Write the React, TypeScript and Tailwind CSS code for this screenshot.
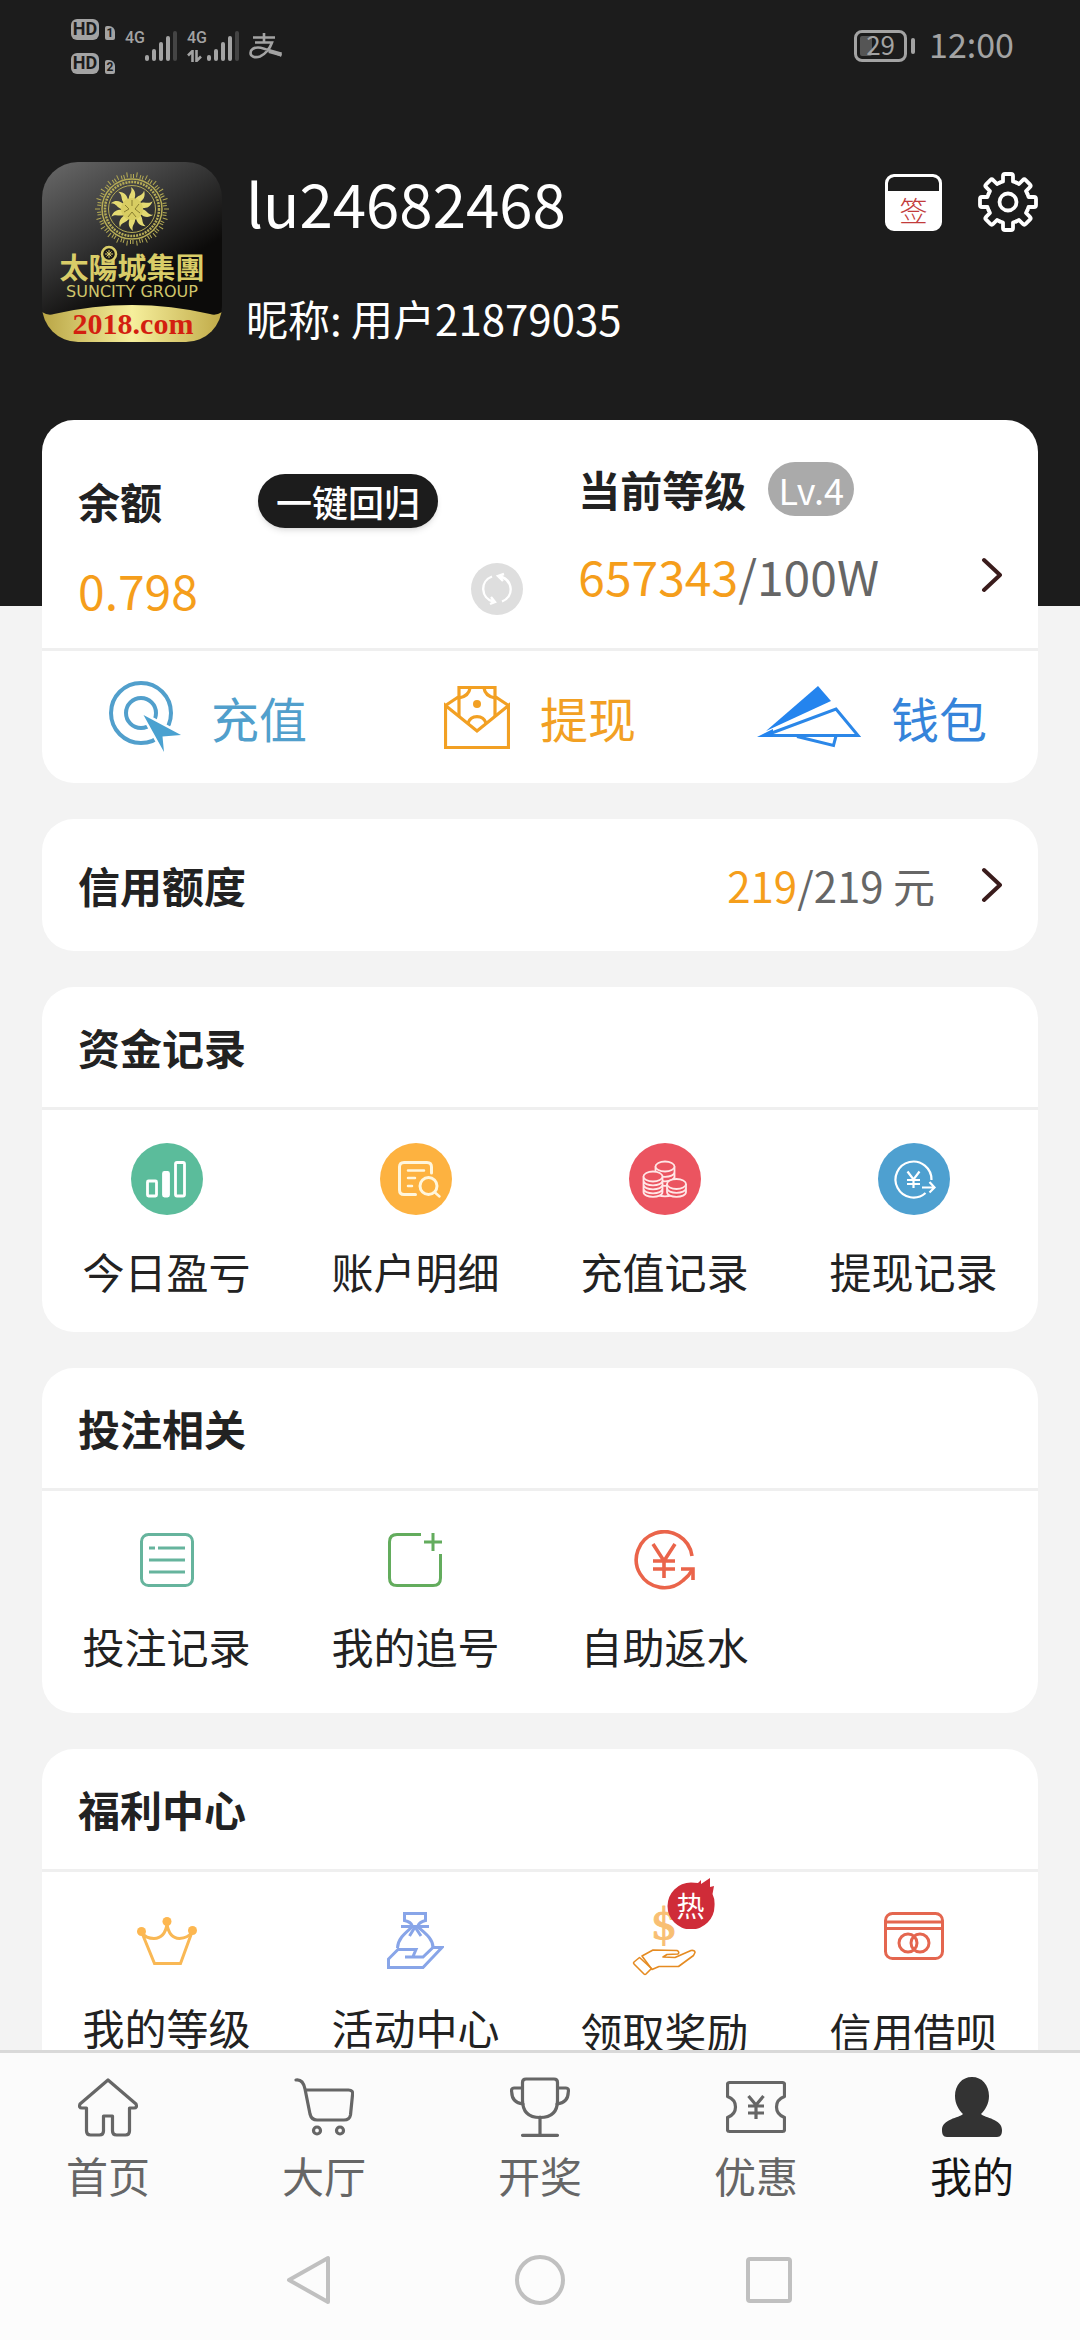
import React from 'react';

const SignalBars = () => (
  <svg width="32" height="32" viewBox="0 0 32 32" fill="#a3a3a3">
    <rect x="0" y="25" width="4" height="6" rx="2" />
    <rect x="7" y="19" width="4" height="12" rx="2" />
    <rect x="14" y="12" width="4" height="19" rx="2" />
    <rect x="21" y="6" width="4" height="25" rx="2" />
    <rect x="28" y="1" width="4" height="30" rx="2" fill="#444" />
  </svg>
);

const HdTag = ({ sim }) => (
  <div className="flex items-end gap-1.5">
    <span className="flex h-[21px] w-7 items-center justify-center rounded-md bg-[#a3a3a3] font-['Roboto',sans-serif] text-[18px] leading-none font-bold text-[#1c1c1c]">
      HD
    </span>
    <span className="flex h-3.5 w-2.5 items-center justify-center rounded-xs rounded-tr-md bg-[#a3a3a3] font-['Roboto',sans-serif] text-[12px] leading-none font-bold text-[#1c1c1c]">
      {sim}
    </span>
  </div>
);

const StatusBar = () => (
  <div className="flex h-[92px] items-center justify-between pr-[66px] pl-[71px] text-[#a3a3a3]">
    <div className="flex items-center">
      <div className="flex flex-col gap-[13px]">
        <HdTag sim="1" />
        <HdTag sim="2" />
      </div>
      <div className="ml-2.5 flex items-end">
        <span className="mb-4 font-['Roboto',sans-serif] text-[16px] leading-none font-medium">4G</span>
        <SignalBars />
      </div>
      <div className="ml-2.5 flex items-end">
        <span className="flex flex-col items-start gap-1">
          <span className="font-['Roboto',sans-serif] text-[16px] leading-none font-medium">4G</span>
          <svg width="15" height="12" viewBox="0 0 15 12" fill="none" stroke="#a3a3a3" strokeWidth="2.6">
            <path d="M5.500 12V1L1 5.500M9.500 0v11l4.500-4.500" />
          </svg>
        </span>
        <SignalBars />
      </div>
      <svg className="ml-2.5" width="33" height="26" viewBox="0 0 33 26" fill="none" stroke="#a3a3a3" strokeWidth="2.6">
        <path d="M15 0v9M4 4.500h22M6 9.500h17c-2 6-7 12-12 14-5 1.600-9.500 0-9.500-3.500S5 14.500 9 14.500c7 0 15 5 23.500 8" />
        <path d="M20 18l12.500 3.500" strokeWidth="4" />
      </svg>
    </div>
    <div className="flex items-center gap-3.5">
      <div className="flex items-center gap-1">
        <div className="relative flex h-8 w-[53px] items-center justify-center rounded-lg border-3 border-[#a3a3a3]">
          <span className="absolute top-[3px] left-[3px] h-5 w-3 rounded-xs bg-[#555]" />
          <span className="relative pb-1 text-[26px] leading-none">29</span>
        </div>
        <span className="h-4 w-1 rounded-full bg-[#a3a3a3]" />
      </div>
      <span className="pb-1 text-[34px] leading-none">12:00</span>
    </div>
  </div>
);

const Avatar = () => {
  const spokes = [...Array(44)].map((_, i) => i * (360 / 44));
  const flames = [...Array(10)].map((_, i) => i * 36);
  return (
    <svg className="size-[180px] shrink-0 rounded-[36px]" viewBox="0 0 180 180">
      <defs>
        <linearGradient id="plate" x1="0" y1="0" x2="0.6" y2="1">
          <stop offset="0" stopColor="#6a6a6a" />
          <stop offset="0.45" stopColor="#333" />
          <stop offset="0.75" stopColor="#0c0b0a" />
        </linearGradient>
        <linearGradient id="gold" x1="0" x2="1">
          <stop offset="0" stopColor="#b9a545" />
          <stop offset="0.5" stopColor="#f6ef9c" />
          <stop offset="1" stopColor="#c0aa48" />
        </linearGradient>
      </defs>
      <rect width="180" height="180" fill="url(#plate)" />
      <g transform="translate(90 47)" stroke="#b5ab55" fill="none">
        {spokes.map((a, i) => (
          <path key={a} d={i % 2 ? 'M0-32v-5' : 'M-1-31v-4M1.500-31v-4'} transform={`rotate(${a})`} />
        ))}
        <circle r="30" strokeWidth="1.500" />
        <circle r="27" strokeWidth="2.500" strokeDasharray="2 1" />
        <circle r="23.500" strokeWidth="1" />
        {flames.map((a) => (
          <path key={a} d="M-3-9C-4-15 1-16-1-22 4-18 4-14 2-9" fill="#e4da72" stroke="none" transform={`rotate(${a})`} />
        ))}
        <circle r="11" fill="#d8cd62" stroke="none" />
        <path d="M-7-4l4 4-5 3M7-5l-4 5 5 4M-4 8l4-5 4 5M0-9v6" stroke="#8a7f30" />
      </g>
      <text x="90" y="117" textAnchor="middle" fill="#d9cd68" fontSize="29" fontWeight="700" fontFamily="Noto Sans CJK TC, sans-serif">
        太陽城集團
      </text>
      <circle cx="67" cy="92" r="7" fill="#1a1918" stroke="#d9cd68" strokeWidth="2.5" />
      <path d="M67 88v8M63 92h8M64.500 89.500l5 5M69.500 89.500l-5 5" stroke="#d9cd68" />
      <text x="90" y="135" textAnchor="middle" fill="#cfc56b" fontSize="16" fontFamily="DejaVu Sans, sans-serif">
        SUNCITY GROUP
      </text>
      <path d="M0 150q6 4 12 2Q90 134 168 152q6 2 12-2v30H0z" fill="url(#gold)" />
      <text x="91" y="172" textAnchor="middle" fill="#d31f10" fontSize="30" fontWeight="700" fontFamily="Liberation Serif, serif">
        2018.com
      </text>
    </svg>
  );
};

const GearIcon = () => {
  const teeth = [0, 45, 90, 135, 180, 225, 270, 315];
  return (
    <svg width="60" height="60" viewBox="0 0 60 60" fill="none" stroke="#fff" strokeWidth="3.8" strokeLinejoin="round" strokeLinecap="round">
      {teeth.map((a) => (
        <path key={a} d="M-8-19.500L-5-20.500V-26Q-5-28-3-28H3Q5-28 5-26V-20.500L8-19.500" transform={`translate(30 30) rotate(${a})`} />
      ))}
      <circle cx="30" cy="30" r="8.500" />
    </svg>
  );
};

const Chevron = () => (
  <svg width="22" height="36" viewBox="0 0 22 36" fill="none" stroke="#3a1c1c" strokeWidth="4" strokeLinecap="round" strokeLinejoin="round">
    <path d="M4 3l16 15L4 33" />
  </svg>
);

const RechargeIcon = () => (
  <svg width="72" height="72" viewBox="0 0 72 72" fill="none" stroke="#519fcc" strokeWidth="4">
    <circle cx="32" cy="32" r="30" />
    <circle cx="32" cy="32" r="15" />
    <path d="M34.500 34L72 54l-18.500 1.500L55 71z" fill="#4aa1d0" stroke="#fff" strokeWidth="5" />
    <path d="M34.500 34L72 54l-18.500 1.500L55 71z" fill="#4aa1d0" stroke="none" />
  </svg>
);

const WithdrawIcon = () => (
  <svg width="66" height="63" viewBox="0 0 66 63" fill="none" stroke="#f2a023" strokeWidth="3.2">
    <path d="M1.500 19.500v42h63v-42L33 45z" />
    <path d="M1.500 19.500L15 10.500M64.500 19.500L51 10.500M15 30V1.500h36V30" />
    <path d="M26 2q-1 8-11 10M40 2q1 8 11 10M24 37a9.500 9.500 0 0 1 18 0" />
    <circle cx="33" cy="18" r="4" fill="#f2a023" stroke="none" />
  </svg>
);

const WalletIcon = () => (
  <svg width="104" height="62" viewBox="0 0 104 62" fill="none" stroke="#2b87e8" strokeWidth="3">
    <path d="M61 0l13 15L9 45z" fill="#2484ee" stroke="none" />
    <path d="M79 23l22 26.500H8z" />
    <path d="M0 51l16-8v8z" fill="#2484ee" stroke="none" />
    <path d="M40 50.500l36.500 9L79 50" />
  </svg>
);

const ProfitIcon = () => (
  <svg className="rounded-full bg-[#5bbc9b]" width="72" height="72" viewBox="0 0 72 72" fill="none" stroke="#fff" strokeWidth="2.8">
    <rect x="16.500" y="38" width="9" height="15" rx="1" />
    <rect x="32.500" y="29.500" width="5" height="23.500" rx="1" fill="#fff" />
    <rect x="44.500" y="19.500" width="9" height="33.500" rx="1.500" />
  </svg>
);

const AccountIcon = () => (
  <svg className="rounded-full bg-[#fdb240]" width="72" height="72" viewBox="0 0 72 72" fill="none" stroke="#fff6dc" strokeWidth="3" strokeLinecap="round">
    <path d="M35.500 51.500H24q-4.500 0-4.500-4.500V24q0-4.500 4.500-4.500h23q4.500 0 4.500 4.500v6" />
    <path d="M28 27.500h16M28 35h7M28 43h4M55 49.500l4.500 4" strokeWidth="2.5" />
    <circle cx="48.500" cy="43" r="8.500" />
  </svg>
);

const CoinsIcon = () => (
  <svg className="rounded-full bg-[#eb5460]" width="72" height="72" viewBox="0 0 72 72" fill="#eb5460" stroke="#ffe6e6" strokeWidth="1.8">
    <path d="M26.500 23.500v25c0 6.500 19 6.500 19 0v-25M26.500 29c0 6.500 19 6.500 19 0M26.500 33.500c0 6.500 19 6.500 19 0M26.500 38c0 6.500 19 6.500 19 0" />
    <ellipse cx="36" cy="23.500" rx="9.500" ry="5" />
    <path d="M14.500 33.500V49c0 6.500 19 6.500 19 0V33.500M14.500 37.500c0 6.500 19 6.500 19 0M14.500 41.500c0 6.500 19 6.500 19 0M14.500 45.500c0 6.500 19 6.500 19 0" />
    <ellipse cx="24" cy="33.500" rx="9.500" ry="5" />
    <path d="M38 41v8c0 6.500 19 6.500 19 0v-8M38 45c0 6.500 19 6.500 19 0" />
    <ellipse cx="47.500" cy="41" rx="9.500" ry="5" />
  </svg>
);

const WithdrawLogIcon = () => (
  <svg className="rounded-full bg-[#4ea0d0]" width="72" height="72" viewBox="0 0 72 72" fill="none" stroke="#fff" strokeWidth="2.2">
    <path d="M53.500 37a18 18 0 1 0-6 13" />
    <path d="M29.500 28.500l6 8 6-8M35.500 36.500V45M29 37h13M29 41h13M44 44.500h12M51.500 39l5 5.500-5 5" />
  </svg>
);

const BetListIcon = () => (
  <svg width="54" height="54" viewBox="0 0 54 54" fill="none" stroke="#66b49d" strokeWidth="3">
    <rect x="1.500" y="1.500" width="51" height="51" rx="7" />
    <path d="M9 15h6M18 15h27M9 27h36M9 39h36" />
  </svg>
);

const ChaseIcon = () => (
  <svg width="56" height="54" viewBox="0 0 56 54" fill="none" stroke="#63ac5d" strokeWidth="3">
    <path d="M33 1.500H9Q1.500 1.500 1.500 9v36q0 7.500 7.500 7.500h36q7.500 0 7.500-7.500V21" />
    <path d="M45 0v18M36 9h18" />
  </svg>
);

const RebateIcon = () => (
  <svg width="62" height="60" viewBox="0 0 62 60" fill="none" stroke="#ea644a" strokeWidth="3.6">
    <path d="M58 26A28 28 0 1 0 49 50.500Q55 46 58.500 39.500" />
    <path d="M47 39h12v11M19 14l11 17 11-17M30 30v18M19 31h22M19 39h22" />
  </svg>
);

const CrownIcon = () => (
  <svg width="60" height="48" viewBox="0 0 60 48" fill="none" stroke="#f9b855" strokeWidth="3">
    <path d="M5 16l12.500 30.500h26L55 15" />
    <path d="M5 16q4 5.500 12 5.500Q28 21 30 7q2 14 12.500 14.500Q51 21 55 15" />
    <g fill="#fdb750" stroke="none">
      <circle cx="4.500" cy="14.500" r="4.500" />
      <circle cx="30" cy="4.500" r="4.500" />
      <circle cx="55.500" cy="13.500" r="4.500" />
    </g>
  </svg>
);

const ActivityIcon = () => (
  <svg width="57" height="58" viewBox="0 0 57 58" fill="none" stroke="#88a5e8" strokeWidth="3">
    <path d="M25 13.500q-1-3.500-7.500-5v-7h21v7q-6 1.500-7.500 5" />
    <path d="M14 14.500h28M25 15C17 22 11 27 10.500 36M31 15c8 7 15 12 15 20.500" />
    <path d="M28 15l-5.500 9M28 15l6 9" />
    <path d="M18 45h18l10-9.500h9L36 55.500H1.500V47L11 37.500h18l-3 7" />
  </svg>
);

const RewardIcon = () => (
  <div className="relative size-16">
    <svg className="overflow-visible" width="64" height="64" viewBox="0 0 64 64" fill="none" stroke="#e58b22" strokeWidth="1.6" strokeLinejoin="round">
      <text x="31" y="28" textAnchor="middle" fill="#f8bf73" stroke="#f8bf73" strokeWidth="1" fontSize="42" fontFamily="DejaVu Serif, serif">$</text>
      <path d="M6.500 46.500L1 51q-1 1 0 2l10 10q1 1 2 0l5.500-5.500z" />
      <path d="M9 45l11-6q12 0 24 .5 3 1.500 1 3.500l-11 .5-4 2.500 12 .5 16-7q4-.5 4 2l-1.500 3-15 11H26l-7 3z" />
    </svg>
    <div className="absolute -top-[33px] left-[34px] h-[51px] w-12">
      <svg width="48" height="51" viewBox="0 0 48 51">
        <path d="M24 4.500l7 .5 3-3v4L43 0v9l4-1-1.500 8Q48 21 47.500 28A23.500 23.500 0 1 1 24 4.500z" fill="#cf2c38" />
      </svg>
      <span className="absolute inset-x-0 top-3 text-center text-[28px] leading-[30px] text-white">热</span>
    </div>
  </div>
);

const CreditIcon = () => (
  <svg className="mb-3.5" width="60" height="50" viewBox="0 0 60 50" fill="none" stroke="#e4664f" strokeWidth="3">
    <rect x="1.500" y="2.500" width="57" height="45" rx="7" />
    <path d="M1 11h58M1 17.500h58" />
    <circle cx="24" cy="32" r="9" />
    <circle cx="36" cy="32" r="9" />
  </svg>
);

const HomeIcon = () => (
  <svg width="60" height="60" viewBox="0 0 60 60" fill="none" stroke="#666" strokeWidth="3.2" strokeLinejoin="round">
    <path d="M30 3L2 27q-1.500 4 2 4h4.500v23q0 4 4 4h9q4 0 4-4V39h9v15q0 4 4 4h9q4 0 4-4V31H56q3.500 0 2-4z" />
  </svg>
);

const CartIcon = () => (
  <svg width="60" height="60" viewBox="0 0 60 60" fill="none" stroke="#666" strokeWidth="3.2" strokeLinecap="round">
    <path d="M2 3q7-1 9 9l5 25q1.500 6 7 6h27q5.500 0 6.500-5L58.500 18q1-5-4-5H12" />
    <circle cx="23" cy="53.500" r="3.500" />
    <circle cx="46" cy="53.500" r="3.500" />
  </svg>
);

const TrophyIcon = () => (
  <svg width="60" height="60" viewBox="0 0 60 60" fill="none" stroke="#666" strokeWidth="3.2" strokeLinecap="round">
    <path d="M16 2h28q3.500 0 3.500 3.500v18q0 17-17.500 17T12.500 23V5.500q0-3.500 3.500-3.500z" />
    <path d="M12.500 11H4q-3 0-2.300 4Q2 26 13 27M47.500 11H56q3 0 2.300 4Q58 26 47 27M30 40v18M12.500 58.300h35" />
  </svg>
);

const CouponIcon = () => (
  <svg width="60" height="60" viewBox="0 0 60 60" fill="none" stroke="#666" strokeWidth="3.2" strokeLinejoin="round">
    <path d="M3.500 5.500h53q2 0 2 2v12q-8 3-8 10.500t8 10.500v12q0 2-2 2h-53q-2 0-2-2v-12q8-3 8-10.500t-8-10.500v-12q0-2 2-2z" />
    <path d="M22.500 19l7.500 9 7.500-9M30 28v14M22 29h16M22 36h16" />
  </svg>
);

const MeIcon = () => (
  <svg width="60" height="60" viewBox="0 0 60 60" fill="#333">
    <path d="M30 0c10 0 17 8 17 19 0 8-4 14-8 18 4 4 21 5 21 16 0 4-1 7-5 7H5c-4 0-5-3-5-7 0-11 17-12 21-16-4-4-8-10-8-18C13 8 20 0 30 0z" />
  </svg>
);

const Section = ({ title, items, bodyClass }) => (
  <section className="rounded-[32px] bg-white">
    <h2 className="flex h-[123px] items-center border-b-3 border-[#efefef] px-9 text-[42px] leading-none font-bold text-[#222]">
      {title}
    </h2>
    <div className={`grid grid-cols-4 ${bodyClass}`}>
      {items.map((item) => (
        <button key={item.label} type="button" className="flex flex-col items-center gap-[26px]">
          <span className="flex min-h-[60px] items-center justify-center">
            <item.icon />
          </span>
          <span className="text-[42px] leading-[60px] text-[#222]">{item.label}</span>
        </button>
      ))}
    </div>
  </section>
);

const App = () => {
  const actions = [
    { label: '充值', icon: RechargeIcon, color: 'text-[#519fcc]' },
    { label: '提现', icon: WithdrawIcon, color: 'text-[#f2a023]' },
    { label: '钱包', icon: WalletIcon, color: 'text-[#3584da]' },
  ];

  const funds = [
    { label: '今日盈亏', icon: ProfitIcon },
    { label: '账户明细', icon: AccountIcon },
    { label: '充值记录', icon: CoinsIcon },
    { label: '提现记录', icon: WithdrawLogIcon },
  ];

  const bets = [
    { label: '投注记录', icon: BetListIcon },
    { label: '我的追号', icon: ChaseIcon },
    { label: '自助返水', icon: RebateIcon },
  ];

  const welfare = [
    { label: '我的等级', icon: CrownIcon },
    { label: '活动中心', icon: ActivityIcon },
    { label: '领取奖励', icon: RewardIcon },
    { label: '信用借呗', icon: CreditIcon },
  ];

  const tabs = [
    { label: '首页', icon: HomeIcon },
    { label: '大厅', icon: CartIcon },
    { label: '开奖', icon: TrophyIcon },
    { label: '优惠', icon: CouponIcon },
    { label: '我的', icon: MeIcon, active: true },
  ];

  return (
    <div className="flex h-screen flex-col bg-[#f3f3f3] font-['Noto_Sans_CJK_SC',sans-serif]">
      <main className="min-h-0 flex-1 overflow-y-auto [scrollbar-width:none]">
        <header className="bg-[#1c1c1c] pb-[258px]">
          <StatusBar />
          <div className="flex items-start px-[42px] pt-[70px]">
            <Avatar />
            <div className="ml-6 flex-1 text-white">
              <h1 className="text-[60px] leading-20">lu24682468</h1>
              <p className="mt-[46px] text-[42px] leading-[60px]">昵称: 用户21879035</p>
            </div>
            <div className="mt-2.5 flex items-center gap-9">
              <button type="button" className="flex size-[57px] flex-col overflow-hidden rounded-[9px] border-3 border-white bg-white">
                <span className="h-3.5 w-full shrink-0 rounded-t-md bg-[#1c1c1c]" />
                <span className="w-full pt-1 text-center text-[28px] leading-[30px] font-light text-[#c23b3b]">签</span>
              </button>
              <button type="button" aria-label="设置">
                <GearIcon />
              </button>
            </div>
          </div>
        </header>

        <div className="-mt-[186px] flex flex-col gap-9 px-[42px] pb-9">
          <section className="rounded-[32px] bg-white">
            <div className="flex border-b-3 border-[#efefef]">
              <div className="w-7/13 pt-[54px] pr-[55px] pb-[33px] pl-9">
                <div className="flex h-[54px] items-center gap-24">
                  <span className="text-[42px] leading-none font-bold text-[#222]">余额</span>
                  <button type="button" className="h-[54px] w-[180px] rounded-full bg-[#1c1c1c] text-[36px] leading-none font-medium text-white shadow-md">
                    一键回归
                  </button>
                </div>
                <div className="mt-[35px] flex h-[52px] items-center justify-between">
                  <span className="text-[48px] leading-none text-[#f59e1b]">0.798</span>
                  <button type="button" aria-label="刷新" className="flex size-[52px] items-center justify-center rounded-full bg-[#dedede]">
                    <svg width="32" height="34" viewBox="0 0 32 34" fill="none" stroke="#fff" strokeWidth="2.4">
                      <path d="M11 4.500C-1 9-1 26 13 30M9 32l5-2-4-5M21 29.500C33 25 33 8 18 4M23 2l-6 2 5 5" />
                    </svg>
                  </button>
                </div>
              </div>
              <div className="flex-1 pt-[42px] pr-9">
                <div className="flex h-[54px] items-center gap-[22px]">
                  <span className="text-[42px] leading-none font-bold text-[#222]">当前等级</span>
                  <span className="flex h-[54px] w-[86px] items-center justify-center rounded-full bg-[#aaa] text-[36px] leading-none text-white">
                    Lv.4
                  </span>
                </div>
                <div className="mt-[33px] flex h-[52px] items-center justify-between">
                  <span className="text-[48px] leading-none text-[#666]">
                    <span className="text-[#f59e1b]">657343</span>/100W
                  </span>
                  <Chevron />
                </div>
              </div>
            </div>
            <div className="grid h-[132px] grid-cols-3">
              {actions.map((action) => (
                <button key={action.label} type="button" className={`flex items-center justify-center gap-[30px] ${action.color}`}>
                  <action.icon />
                  <span className="text-[48px] leading-none">{action.label}</span>
                </button>
              ))}
            </div>
          </section>

          <section className="flex h-[132px] items-center rounded-[32px] bg-white px-9">
            <h2 className="flex-1 text-[42px] leading-none font-bold text-[#222]">信用额度</h2>
            <span className="mr-[45px] text-[42px] leading-none text-[#666]">
              <span className="text-[#f59e1b]">219</span>/219 元
            </span>
            <Chevron />
          </section>

          <Section title="资金记录" items={funds} bodyClass="pt-[33px] pb-[31px]" />
          <Section title="投注相关" items={bets} bodyClass="pt-[39px] pb-[37px]" />
          <Section title="福利中心" items={welfare} bodyClass="pt-[39px] pb-[37px]" />
        </div>
      </main>

      <nav className="grid grid-cols-5 border-t-3 border-[#d9d9d9] bg-[#fbfbfb] pt-6 pb-[15px]">
        {tabs.map((tab) => (
          <a key={tab.label} href="#" className="flex flex-col items-center gap-2">
            <tab.icon />
            <span className={`text-[42px] leading-[60px] ${tab.active ? 'text-[#151515]' : 'text-[#666]'}`}>
              {tab.label}
            </span>
          </a>
        ))}
      </nav>

      <div className="flex justify-center gap-[180px] bg-[#fcfcfc] py-[35px]">
        <button type="button" aria-label="返回">
          <svg width="50" height="50" viewBox="0 0 50 50" fill="none" stroke="#c0c0c0" strokeWidth="4" strokeLinejoin="round">
            <path d="M43 3v44L4 25z" />
          </svg>
        </button>
        <button type="button" aria-label="主页">
          <svg width="50" height="50" viewBox="0 0 50 50" fill="none" stroke="#c0c0c0" strokeWidth="4">
            <circle cx="25" cy="25" r="23" />
          </svg>
        </button>
        <button type="button" aria-label="最近任务">
          <svg width="50" height="50" viewBox="0 0 50 50" fill="none" stroke="#c0c0c0" strokeWidth="4">
            <rect x="3" y="4" width="42" height="42" rx="2" />
          </svg>
        </button>
      </div>
    </div>
  );
};

export default App;
